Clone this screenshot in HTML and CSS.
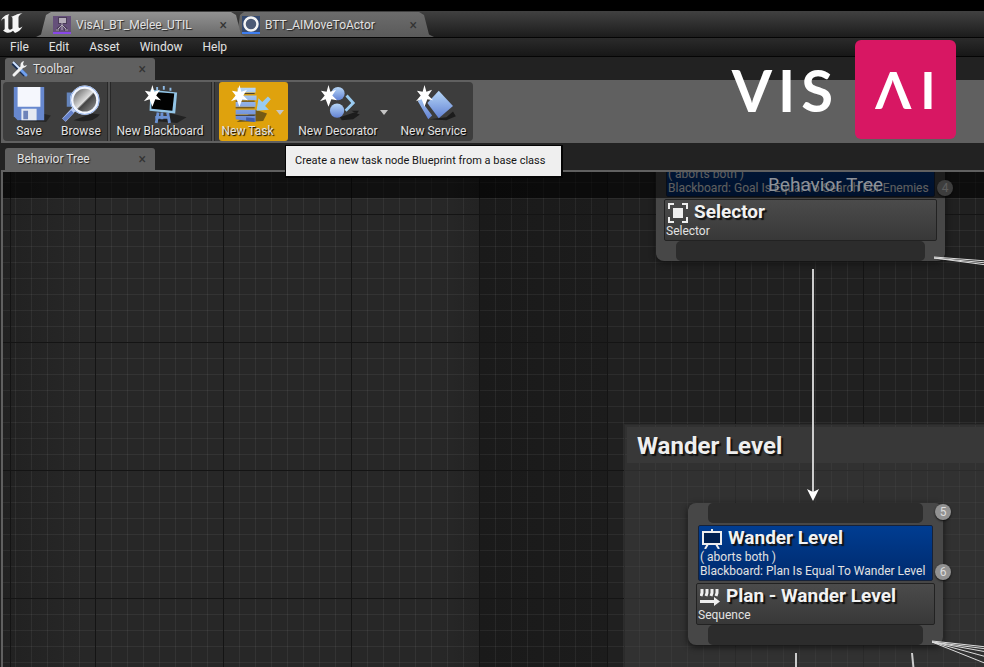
FILE: index.html
```html
<!DOCTYPE html>
<html lang="en">
<head>
<meta charset="utf-8">
<title>VisAI_BT_Melee_UTIL</title>
<link rel="stylesheet" href="styles.css">
</head>
<body>
<div class="app">
  <header class="titlebar">
    <svg class="engine-logo" viewBox="0 0 24 24" aria-hidden="true">
      <path d="M1 9C2.500 5 5 3 9.500 2C8.400 3.200 8.300 4 8.300 5.500V16C8.700 18.200 10.800 18 12.500 16.500V7C12.500 5.500 12 5 11 4.800C13.500 4 15.500 3 17 2.200L22.500 1C20.300 2.500 18.500 3.800 18.500 5.500V15C19 16.500 20.500 16 22.500 14.500C21 18 18 20 15 21L13 18.800C11.500 20.300 9.500 21 7 20.700C5.300 20.200 4 19.500 3 18C4.300 18.200 4.700 17.500 4.700 16.500V8C4.700 6 3.500 6 1 9Z"/>
    </svg>
    <nav class="doc-tabs">
      <div class="doc-tab active">
        <svg class="doc-icon" viewBox="0 0 18 18" aria-hidden="true"><rect width="18" height="17" fill="#65507a"/><path d="M6 2h7v5H6zM9 7v3M4 13l5-4 5 4M3 14h4M11 14h4" fill="none" stroke="#4b3d59" stroke-width="2"/><path d="M6 2h7v5H6z" fill="#b5adba"/><path d="M9 7v7M5 13l4-4 4 4M3 14h3M12 14h3" fill="none" stroke="#b5adba"/><rect y="16" width="18" height="2" fill="#8847e8"/></svg>
        <span class="doc-name">VisAI_BT_Melee_UTIL</span>
        <button class="close" aria-label="Close">×</button>
      </div>
      <div class="doc-tab">
        <svg class="doc-icon" viewBox="0 0 18 18" aria-hidden="true"><rect width="18" height="17" fill="#34496f"/><circle cx="9" cy="8" r="6.500" fill="#4c5a75" stroke="#f4f4f4" stroke-width="2.500"/><rect y="16" width="18" height="2" fill="#3d7df0"/></svg>
        <span class="doc-name">BTT_AIMoveToActor</span>
        <button class="close" aria-label="Close">×</button>
      </div>
    </nav>
  </header>
  <nav class="menubar">
    <button>File</button><button>Edit</button><button>Asset</button><button>Window</button><button>Help</button>
  </nav>
  <div class="panel-head">
    <div class="panel-tab">
      <svg class="tools-icon" viewBox="0 0 18 18" aria-hidden="true"><path d="M2 3l6 6M10 11l4 4" stroke="#182c50" stroke-width="4"/><path d="M2 2l7 7" stroke="#cfe2ff" stroke-width="2"/><path d="M10 10l5 5" stroke="#6fa0ee" stroke-width="3" stroke-linecap="round"/><path d="M3 15l8-8" stroke="#f2f2f2" stroke-width="3" stroke-linecap="round"/><path d="M13 1a4 4 0 0 0-3 6 4 4 0 0 0 6-2l-3 1-1-2z" fill="#f2f2f2"/></svg>
      <span>Toolbar</span>
      <button class="close" aria-label="Close">×</button>
    </div>
  </div>
  <div class="toolbar">
    <div class="tool-group">
      <button class="tool save">
        <svg viewBox="0 0 40 40" aria-hidden="true"><defs><linearGradient id="blue" x1="0" y1="0" x2="0" y2="1"><stop offset="0" stop-color="#b7d7f7"/><stop offset="1" stop-color="#6282d4"/></linearGradient></defs><path d="M8 38l30 1 5-7-9-2z" fill="#222" opacity=".8"/><path d="M4 2h32v35H8l-4-4z" fill="#6788cf"/><path d="M8 2h24v21H8z" fill="#f5f7fd"/><path d="M12 25h16v12H12z" fill="#e4e9f2"/><path d="M14 27h5v9h-5z" fill="#6d83b9"/></svg>
        <span>Save</span>
      </button>
      <button class="tool browse">
        <svg viewBox="0 0 40 40" aria-hidden="true"><defs><linearGradient id="lens" x1="0" y1="0" x2="1" y2="1"><stop offset="0" stop-color="#555"/><stop offset=".5" stop-color="#ddd"/><stop offset=".56" stop-color="#444"/><stop offset="1" stop-color="#999"/></linearGradient></defs><path d="M12 37q20 4 28-6l-8-1z" fill="#222"/><path d="M5 8h9v15H5z" fill="#6484bb"/><path d="M2 37l12-13" stroke="#b7c9f4" stroke-width="5"/><path d="M2 37l9-9" stroke="#637fc8" stroke-width="4"/><circle cx="24" cy="16" r="15.500" fill="#f2f6ff"/><circle cx="24" cy="16" r="15" fill="none" stroke="#8aabe6" stroke-width="1"/><circle cx="24" cy="16" r="12" fill="url(#lens)"/></svg>
        <span>Browse</span>
      </button>
      <i class="separator"></i>
      <button class="tool blackboard">
        <svg viewBox="0 0 40 40" aria-hidden="true"><path d="M14 38l24 2 10-6-16-4z" fill="#222"/><path d="M18 29l-2 11M22 29v7M28 29l2 11M15 34h15" stroke="#6b91d2" stroke-width="3"/><path d="M17 2v4M24 1v4M31 3v3" stroke="#8fbce8" stroke-width="2"/><path d="M10 5l28 3-2 22-27-3z" fill="#93c5e7"/><path d="M11 7l24 2-2 18-22-2z" fill="#020202"/><path class="spark" transform="translate(12 11)" d="M0-11L2-4 8-6 4 0 9 5 3 4 0 12-3 4-9 6-4 0-8-5-2-4z"/></svg>
        <span>New Blackboard</span>
      </button>
      <i class="separator wide"></i>
      <div class="split selected">
        <button class="tool task">
          <svg viewBox="0 0 40 40" aria-hidden="true"><path d="M8 39l28-1 4-8-12-4z" fill="#594717" opacity=".8"/><path d="M9 3h19v5H9zM7 11h22v5H7zM7 18h21v5H7zM7 26h21v5H7zM7 32h21v7l-21-3z" fill="url(#blue)"/><path d="M7 9h20M7 17h20M7 24h20M7 32h20" stroke="#403a34"/><path d="M18 34l9 1v4l-9-1z" fill="#405caa"/><path d="M29 27l2-13 4 4 6-6 3 3-6 7 4 4z" fill="#9acbee"/><path class="spark" transform="translate(11 11)" d="M0-11L2-4 8-6 4 0 9 5 3 4 0 12-3 4-9 6-4 0-8-5-2-4z"/></svg>
          <span>New Task</span>
        </button>
        <button class="drop" aria-label="New Task options"></button>
      </div>
      <div class="split">
        <button class="tool decorator">
          <svg viewBox="0 0 40 40" aria-hidden="true"><path d="M22 34l15-5 6 2-7 5-12 1zM34 27l8 0-2 3z" fill="#1c1c1c"/><circle cx="20" cy="9" r="7" fill="url(#blue)"/><circle cx="19" cy="27" r="7.500" fill="url(#blue)"/><path d="M29 11l7 8-8 8" fill="none" stroke="#9acbf1" stroke-width="3"/><path class="spark" transform="translate(10 11)" d="M0-11L2-4 8-6 4 0 9 5 3 4 0 12-3 4-9 6-4 0-8-5-2-4z"/></svg>
          <span>New Decorator</span>
        </button>
        <button class="drop" aria-label="New Decorator options"></button>
      </div>
      <button class="tool service">
        <svg viewBox="0 0 40 40" aria-hidden="true"><path d="M15 36l18-2 7-6 3 5-10 4z" fill="#1c1c1c"/><path d="M3 17l7-9 4 4-5 8 9 12-4 4z" fill="url(#blue)"/><path d="M25 6l15 16-15 13-12-16z" fill="url(#blue)"/><path class="spark" transform="translate(10 11)" d="M0-11L2-4 8-6 4 0 9 5 3 4 0 12-3 4-9 6-4 0-8-5-2-4z"/></svg>
        <span>New Service</span>
      </button>
    </div>
  </div>
  <div class="panel-head graph-head">
    <div class="panel-tab">
      <span>Behavior Tree</span>
      <button class="close" aria-label="Close">×</button>
    </div>
  </div>
  <main class="graph">
    <section class="comment"><h2>Wander Level</h2></section>

    <article class="node selector-node">
      <div class="box condition">
        <p>( aborts both )</p>
        <p>Blackboard: Goal Is Equal To Search For Enemies</p>
      </div>
      <div class="box">
        <h3><svg viewBox="0 0 20 20" aria-hidden="true"><path d="M1 6V1h5M14 1h5v5M19 14v5h-5M6 19H1v-5" fill="none" stroke="#eee" stroke-width="2"/><path d="M5 5h10v10H5z" fill="#eee"/></svg>Selector</h3>
        <p>Selector</p>
      </div>
      <div class="pin"></div>
      <span class="badge">4</span>
    </article>

    <article class="node plan-node">
      <div class="pin"></div>
      <div class="box condition">
        <h3><svg viewBox="0 0 20 20" aria-hidden="true"><path d="M1 3h18v12H1z" fill="#00204f" stroke="#eee" stroke-width="2"/><path d="M10 0v3M6 15l-3 5M14 15l3 5" fill="none" stroke="#eee" stroke-width="2"/></svg>Wander Level</h3>
        <p>( aborts both )</p>
        <p>Blackboard: Plan Is Equal To Wander Level</p>
      </div>
      <div class="box">
        <h3><svg viewBox="0 0 20 20" aria-hidden="true"><path d="M2 2v4l-1 3M7 2v4L6 9M12 2v4l-1 3M17 2v4l-1 3M0 14.500h15" fill="none" stroke="#eee" stroke-width="3"/><path d="M14 10l6 4.500-6 4.500z" fill="#eee"/></svg>Plan - Wander Level</h3>
        <p>Sequence</p>
      </div>
      <div class="pin"></div>
      <span class="badge top">5</span>
      <span class="badge mid">6</span>
    </article>
    <svg class="wires" width="984" height="495" viewBox="3 172 984 495" aria-hidden="true">
      <path d="M813 269V492M796 653v20M912 653l2 20"/>
      <path class="thin" d="M934 257l53 4M934 258l53 7M934 258l53 5M932 641l55 6M932 642l55 10M932 642l55 15M932 642l55 22M932 642l55 7"/>
      <path class="head" d="M807 489l6 3 6-3-6 12z"/>
    </svg>
    <div class="graph-title">Behavior Tree</div>
  </main>
  <div class="brand">
    <div class="brand-vis"><span>V</span><span>I</span><span>S</span></div>
    <div class="brand-ai"><span>Λ</span><span>I</span></div>
  </div>
  <div class="tooltip" role="tooltip">Create a new task node Blueprint from a base class</div>
</div>
</body>
</html>
```
FILE: styles.css
```css
* { box-sizing: border-box; }
body { margin: 0; background: #222; font: 12px/14px Roboto, "Liberation Sans", sans-serif; color: #e2e2e2; }
h2, h3, p { margin: 0; }
button { border: 0; padding: 0; background: none; color: inherit; font: inherit; text-shadow: inherit; }
.app { position: relative; display: flex; flex-direction: column; height: 100vh; overflow: hidden; }

.titlebar { display: flex; flex: none; height: 37px; border-top: 11px solid #000; background: linear-gradient(#414141, #1c1c1c); }
.engine-logo { width: 24px; height: 24px; margin-top: 1px; fill: #f5f5f5; }
.doc-tabs { display: flex; margin-left: 12px; padding-top: 1px; }
.doc-tab { display: flex; align-items: center; width: 202px; height: 25px; padding: 0 17px 0 10px; background: linear-gradient(#6c6c6c, #5a5a5a); clip-path: polygon(0 100%, 5px 90%, 8px 12%, 12px 0, calc(100% - 15px) 0, calc(100% - 10px) 12%, calc(100% - 5px) 90%, 100% 100%); text-shadow: 1px 1px 1px #222; }
.doc-tab.active { position: relative; z-index: 1; width: 210px; padding: 0 19px 0 17px; clip-path: polygon(0 100%, 5px 90%, 10px 12%, 15px 0, calc(100% - 15px) 0, calc(100% - 10px) 12%, calc(100% - 5px) 90%, 100% 100%); background: linear-gradient(#929292, #686868); }
.doc-tab + .doc-tab { margin-left: -14px; }
.doc-icon { width: 18px; height: 18px; margin-right: 5px; }
.close { margin-left: auto; color: #333; font-size: 14px; text-shadow: none; }

.menubar { display: flex; flex: none; gap: 20px; height: 20px; padding: 0 10px; border: solid #050505; border-width: 1px 0; background: linear-gradient(#2b2b2b, #171717); }

.panel-head { flex: none; height: 23px; padding: 1px 5px 0; background: #222; }
.panel-tab { display: flex; align-items: center; width: 150px; height: 22px; padding: 0 9px 0 6px; border-radius: 3px 3px 0 0; background: #606060; text-shadow: 1px 1px 1px #222; }
.tools-icon { width: 18px; height: 18px; margin-right: 4px; }
.graph-head { height: 27px; padding-top: 5px; }
.graph-head .panel-tab { padding-left: 12px; }

.toolbar { display: flex; flex: none; height: 63px; margin-left: 1px; padding: 2px; background: #606060; }
.tool-group { display: flex; height: 59px; border-radius: 4px; background: #3d3d3d; overflow: hidden; text-shadow: 1px 1px 1px #000; }
.tool { display: flex; flex-direction: column; align-items: center; gap: 1px; padding: 3px 6px 0; white-space: nowrap; }
.tool svg { width: 38px; height: 38px; overflow: visible; }
.spark { fill: #fff; }
.save { width: 52px; }
.browse { width: 52px; }
.blackboard { width: 98px; }
.separator { width: 4px; background: #505050; border: solid #282828; border-width: 0 1px; }
.separator.wide { margin: 0 4px 0 2px; }
.split { display: flex; width: 106px; }
.split.selected { width: 69px; border-radius: 3px; background: #dfa20d; }
.task { width: 57px; padding: 3px 0 0; }
.decorator { width: 92px; padding: 3px 0 0 8px; }
.service { width: 79px; padding: 3px 0 0; }
.drop { width: 8px; height: 5px; margin: 28px 0 0; background: #c5c5c5; clip-path: polygon(0 0, 100% 0, 50% 100%); }

.graph { position: relative; flex: 1; overflow: hidden; margin-left: 1px; border: solid #606060; border-width: 2px 0 0 2px;
  background:
    repeating-linear-gradient(90deg, #141414 0 1px, transparent 1px 128px) 92px 0,
    repeating-linear-gradient(#141414 0 1px, transparent 1px 128px) 0 42px,
    repeating-linear-gradient(90deg, rgba(255,255,255,.055) 0 1px, transparent 1px 16px) 12px 0,
    repeating-linear-gradient(rgba(255,255,255,.055) 0 1px, transparent 1px 16px) 0 10px,
    linear-gradient(90deg, #212121, #272727 80px 440px, #232323 476px, #1a1a1a 477px, #1c1c1c 604px, #202020 605px); }
.wires { position: absolute; left: 0; top: 0; fill: none; stroke: #ccc; stroke-width: 2px; }
.wires .thin { stroke: #ddd; stroke-width: 1px; }
.wires .head { fill: #fff; stroke: none; }
.comment { position: absolute; left: 621px; top: 252px; right: 0; bottom: 0; padding: 2px 0 0 2px; background: rgba(72,72,72,.45); border: solid #2b2b2b; border-width: 1px 0 0 1px; }
.comment h2 { padding: 2px 10px 0; background: #383838; font-size: 24px; line-height: 34px; text-shadow: 2px 2px 1px #111; color: #eee; }

.node { position: absolute; border-radius: 8px; background: #474747; box-shadow: 0 2px 6px #111; white-space: nowrap; }
.selector-node { left: 653px; top: -31px; width: 289px; padding: 0 8px; }
.plan-node { left: 685px; top: 331px; width: 255px; padding: 0 8px; }
.box { padding: 1px 1px 2px; border: 1px solid #222; border-radius: 2px; background: linear-gradient(#4b4b4b, #383838); }
.box.condition { margin: 2px; border-color: #172238; background: linear-gradient(#003d92, #002a6c); }
.selector-node .condition { padding: 23px 1px 1px; }
.box h3 { display: flex; align-items: flex-start; gap: 6px; height: 23px; font-size: 19px; line-height: 22px; color: #f2f2f2; text-shadow: 2px 2px 1px #111; }
.box h3 svg { width: 20px; height: 20px; margin: 2px 0 0 2px; }
.pin { height: 20px; margin: 0 12px; border-radius: 5px; background: #2c2c2c; }
.badge { position: absolute; right: -8px; top: 39px; width: 16px; height: 16px; border-radius: 50%; background: #929292; color: #ddd; line-height: 16px; text-align: center; box-shadow: 0 1px 2px #111; }
.badge.top { top: 1px; }
.badge.mid { top: 61px; }
.graph-title { position: absolute; left: 0; top: 0; right: 0; height: 26px; padding-left: 765px; background: rgba(0,0,0,.58); color: #8d9299; font-size: 19px; line-height: 26px; white-space: nowrap; }

.brand { position: absolute; right: 28px; top: 40px; display: flex; align-items: center; gap: 22px; color: #fff; font-family: Lato, sans-serif; font-weight: 700; }
.brand-vis { display: flex; gap: 6px; font-size: 58px; line-height: 98px; }
.brand-ai { display: flex; justify-content: center; gap: 9px; width: 101px; height: 99px; border-radius: 6px; background: #d81763; font-size: 52px; line-height: 98px; }
.tooltip { position: absolute; left: 285px; top: 145px; padding: 8px 16px 8px 9px; border: solid #050505; border-width: 1px 2px 2px 1px; background: #efefef; color: #151515; font-size: 11px; white-space: nowrap; }
```
